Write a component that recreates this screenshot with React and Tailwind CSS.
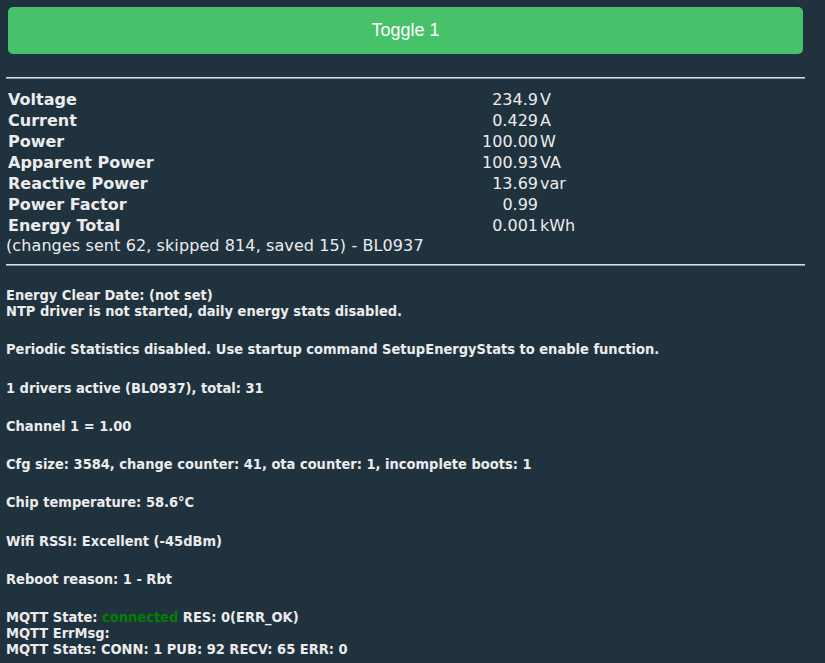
const rows = [
  ['Voltage', '234.9', 'V'],
  ['Current', '0.429', 'A'],
  ['Power', '100.00', 'W'],
  ['Apparent Power', '100.93', 'VA'],
  ['Reactive Power', '13.69', 'var'],
  ['Power Factor', '0.99', ''],
  ['Energy Total', '0.001', 'kWh'],
];

const Rule = ({ className = '' }) => (
  <div className={`h-[2px] border-t border-t-[#dcdcdc] border-b border-b-[#8c949b] ${className}`} />
);

function App() {
  return (
    <div className="min-h-screen bg-[#21323f] text-[#ececec] font-['DejaVu_Sans',sans-serif]">
      <div className="w-[799px] ml-[6px] pt-[7px]">
        <button className="ml-[2px] w-[795px] h-[47px] rounded-[5px] bg-[#47c26a] text-white text-[18px] font-['Liberation_Sans',sans-serif]">
          Toggle 1
        </button>

        <Rule className="mt-[23px]" />

        <div className="mt-[10px] grid grid-cols-[466px_66px_1fr] text-[16px] leading-[21px]">
          {rows.map(([label, value, unit]) => (
            <div key={label} className="contents">
              <div className="pl-[2px] font-bold">{label}</div>
              <div className="text-right">{value}</div>
              <div className="pl-[2px]">{unit}</div>
            </div>
          ))}
        </div>
        <div className="text-[16px] leading-[19px] tracking-[0.1px]">(changes sent 62, skipped 814, saved 15) - BL0937</div>

        <Rule className="mt-[9px]" />

        <div className="mt-[21px] flex flex-col gap-[22.3px] text-[14.5px] leading-[16px] font-bold font-['DejaVu_Sans_Condensed','DejaVu_Sans',sans-serif]">
          <div>
            Energy Clear Date: (not set)<br />
            NTP driver is not started, daily energy stats disabled.
          </div>
          <div>Periodic Statistics disabled. Use startup command SetupEnergyStats to enable function.</div>
          <div>1 drivers active (BL0937), total: 31</div>
          <div>Channel 1 = 1.00</div>
          <div>Cfg size: 3584, change counter: 41, ota counter: 1, incomplete boots: 1</div>
          <div>Chip temperature: 58.6°C</div>
          <div>Wifi RSSI: Excellent (-45dBm)</div>
          <div>Reboot reason: 1 - Rbt</div>
          <div>
            MQTT State: <span className="text-[#008000]">connected</span> RES: 0(ERR_OK)<br />
            MQTT ErrMsg:<br />
            MQTT Stats: CONN: 1 PUB: 92 RECV: 65 ERR: 0
          </div>
        </div>
      </div>
    </div>
  );
}

export default App;
